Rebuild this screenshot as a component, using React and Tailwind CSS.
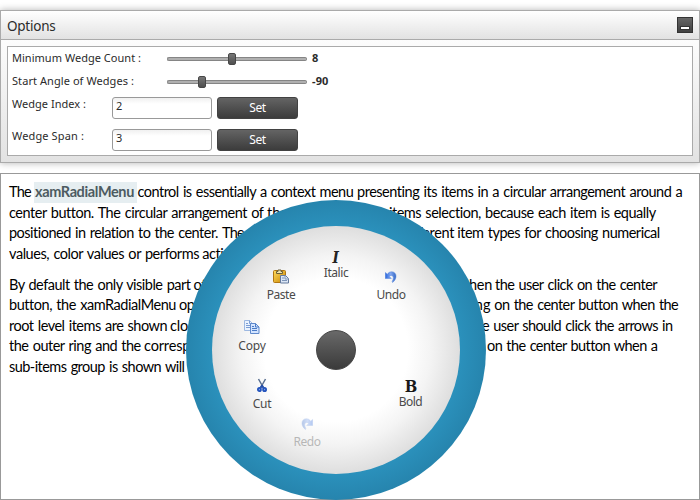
import React, { useLayoutEffect, useRef } from "react";

// Text tracked so that it fills exactly the given width.
function Fit({ w, className = "", children }) {
  const ref = useRef(null);
  useLayoutEffect(() => {
    const el = ref.current;
    el.style.letterSpacing = "0px";
    const natural = el.getBoundingClientRect().width;
    el.style.letterSpacing = (w - natural) / el.textContent.length + "px";
  }, [w, children]);
  return (
    <span className="shrink-0" style={{ width: w }}>
      <span ref={ref} className={"inline-block whitespace-nowrap " + className}>{children}</span>
    </span>
  );
}

// Each run is [text, left, right] inside the document.
const paragraphs = [
  [
    [["The", 9, 31], ["xamRadialMenu", 35, 134, true], ["control is essentially a context menu", 137.5, 353.5], ["presenting its items in a circular arrangement around a", 357, 682.5]],
    [["center button. The circular arrangement of", 9, 263], ["the", 267, 288], ["items selection, because each item is equally", 389, 656]],
    [["positioned in relation to the center.", 9, 218.5], ["The", 222, 244], ["different", 402, 453.5], ["item types for choosing numerical", 457.3, 659.7]],
    [["values, color values or performs", 9, 199], ["actions.", 202.3, 248]],
  ],
  [
    [["By default the only visible part", 9, 190.5], ["of", 193.5, 206], ["when", 458, 492], ["the user click on the center", 495, 657]],
    [["button, the xamRadialMenu", 9, 175.5], ["opens", 179, 215], ["clicking", 443, 490.5], ["on the center button when the", 494.3, 677.7]],
    [["root level items are shown", 9, 167], ["closes", 170, 208], ["the", 469, 489.5], ["user should click the arrows in", 493.3, 672.5]],
    [["the outer ring and the", 9, 140.8], ["corresponding", 144, 233], ["on the center button when a", 487, 657]],
    [["sub-items group is shown will", 9, 184.5]],
  ],
];

function Line({ runs }) {
  let x = 1;
  return (
    <div className="flex h-[20.5px] items-center">
      {runs.map(([text, left, right, marked], i) => {
        const gap = left - x;
        x = right;
        return (
          <React.Fragment key={i}>
            <span className="shrink-0" style={{ width: gap }} />
            {marked ? (
              <span className="-mr-[3px] -ml-px flex h-[21px] shrink-0 items-center bg-[#e6eef1] pr-[3px] pl-px">
                <Fit w={right - left} className="font-bold text-[#4d5b61]">{text}</Fit>
              </span>
            ) : (
              <Fit w={right - left}>{text}</Fit>
            )}
          </React.Fragment>
        );
      })}
    </div>
  );
}

function Slider({ thumb }) {
  return (
    <div className="flex h-3 w-[140px] items-center">
      <div className="h-1 shrink-0 rounded-l-sm border-y border-l border-[#858585] bg-[#b0b0b0]" style={{ width: thumb }} />
      <div className="h-3 w-2 shrink-0 rounded-[2px] border border-[#474747] bg-linear-to-b from-[#777] to-[#505050]" />
      <div className="h-1 flex-1 rounded-r-sm border-y border-r border-[#858585] bg-[#b0b0b0]" />
    </div>
  );
}

function SliderRow({ label, labelW, thumb, value, valueW }) {
  return (
    <div className="flex h-[23px] items-center">
      <div className="w-[155px]"><Fit w={labelW}>{label}</Fit></div>
      <Slider thumb={thumb} />
      <div className="ml-[5px] font-bold"><Fit w={valueW}>{value}</Fit></div>
    </div>
  );
}

function InputRow({ label, labelW, value }) {
  return (
    <div className="flex h-8 items-start">
      <div className="w-[100px] leading-[13px]"><Fit w={labelW}>{label}</Fit></div>
      <div className="h-[22px] w-[100px] rounded-[3px] border border-[#999] bg-linear-to-b from-[#f0f0f0] to-white to-30% pl-[3px] leading-[15px]">{value}</div>
      <button className="ml-[5px] flex h-[22px] w-[81px] items-center justify-center rounded-[3px] border border-[#424242] bg-linear-to-b from-[#646464] to-[#3c3c3c] text-xs text-white">
        <Fit w={16.5}>Set</Fit>
      </button>
    </div>
  );
}

const PasteIcon = () => (
  <svg width="16" height="16" viewBox="0 0 16 16">
    <defs><linearGradient id="pg" x2="1" y2="1"><stop stopColor="#ffdc60" /><stop offset="1" stopColor="#c98500" /></linearGradient></defs>
    <rect x=".5" y="1.5" width="12" height="12" rx="1" fill="url(#pg)" stroke="#b07510" />
    <path d="M3.5 4.500V2.5H5V1h3v1.5h1.5v2z" fill="#eee4ad" stroke="#6a5f38" />
    <path d="M7.500 6.500h5l3 3v4.500h-8z" fill="#dbe6f5" stroke="#657a9c" />
    <path d="M12 6.500V10h3.500M9 9h2M9 11.500h5" fill="none" stroke="#7d94b8" />
  </svg>
);
const CopyIcon = () => (
  <svg width="16" height="16" viewBox="0 0 16 16">
    <path d="M.5 1.500h5l3 3v7h-8z" fill="#eaf3ff" stroke="#9db8e1" />
    <path d="M5.500 1.500v3h3M2 4.500h2M2 6.500h5M2 8.500h5" fill="none" stroke="#7b9dd4" />
    <path d="M6.500 4.500h5l3.500 3.500v6.500h-8.500z" fill="#d3e4ff" stroke="#5f89cb" />
    <path d="M11.500 4.500v3.500h3.500M8 7.500h2M8 9.500h5M8 11.500h5" fill="none" stroke="#4a7bc6" />
  </svg>
);
const CutIcon = () => (
  <svg width="10" height="15" viewBox="0 0 10 15">
    <path d="M1.500 1L6 9M8.500 1L4 9" stroke="#596f90" strokeWidth="1.500" />
    <path d="M5 7.500L3.500 10M5 7.500L6.500 10" stroke="#264fa8" strokeWidth="2" />
    <ellipse cx="2.400" cy="11.500" rx="1.500" ry="1.700" fill="#86a7ee" stroke="#2454bd" strokeWidth="1.800" />
    <ellipse cx="7.600" cy="11.500" rx="1.500" ry="1.700" fill="#86a7ee" stroke="#2454bd" strokeWidth="1.800" />
  </svg>
);
const UndoIcon = () => (
  <svg width="12" height="12" viewBox="0 0 12 12">
    <defs><linearGradient id="ug" x2="1"><stop stopColor="#2865dc" /><stop offset=".5" stopColor="#83a8f0" /><stop offset="1" stopColor="#3467c4" /></linearGradient></defs>
    <path d="M.3 1.500v6h6L4.300 5.400C7 2.800 10 5.500 7.200 10.500L7.500 11.500C12.500 8 12 1 7 .8C4.900 .7 3.500 1.500 2.400 3.200z" fill="url(#ug)" stroke="#5584db" strokeWidth=".5" />
  </svg>
);

// Dial entries, placed by the centre of the icon and of the caption.
const items = [
  { label: "Italic", w: 24.500, x: 150, iy: 57.500, ly: 73, glyph: "I" },
  { label: "Undo", w: 29, x: 205, iy: 76.500, ly: 95, icon: <UndoIcon /> },
  { label: "Bold", w: 23.500, x: 224.500, iy: 186.500, ly: 202, glyph: "B" },
  { label: "Redo", w: 27, x: 121, iy: 223.500, ly: 242, icon: <span className="-scale-x-100"><UndoIcon /></span>, off: true },
  { label: "Cut", w: 18.500, x: 76, iy: 185.500, ly: 204, icon: <CutIcon /> },
  { label: "Copy", w: 27.500, x: 66, iy: 127, ly: 146, icon: <CopyIcon /> },
  { label: "Paste", w: 28.500, x: 95, iy: 76.500, ly: 95, icon: <PasteIcon /> },
];

function RadialMenu() {
  return (
    <div className="absolute top-[26px] left-[185px] size-[300px] rounded-full bg-[radial-gradient(circle_at_center,#2d94c0_0%,#2b91bc_58%,#2684ad_71%)]">
      <div className="absolute top-[26px] left-[26px] size-[248px] rounded-full bg-[radial-gradient(circle_closest-side,#fff_58%,#f4f4f4_76%,#dedede_100%)]" />
      <div className="absolute top-[130px] left-[130px] size-10 rounded-full border border-[#454545] bg-linear-to-b from-[#696969] to-[#3b3b3b]" />
      {items.map((it) => (
        <div key={it.label} className={it.off ? "opacity-35" : ""}>
          <div className="absolute flex h-4 w-10 items-center justify-center" style={{ left: it.x - 20, top: it.iy - 8 }}>
            {it.icon || (
              <span className={it.glyph === "I" ? "inline-block scale-x-85 font-['DejaVu_Serif',serif] text-[16px] leading-3 font-bold text-[#222] italic" : "inline-block scale-x-90 font-['DejaVu_Serif',serif] text-[16.500px] leading-3 font-bold text-[#181818]"}>{it.glyph}</span>
            )}
          </div>
          <div className="absolute flex h-4 w-10 items-center justify-center font-['Noto_Sans',sans-serif] text-xs leading-[14px] text-[#4a4a4a]" style={{ left: it.x - 20, top: it.ly - 8 }}>
            <Fit w={it.w}>{it.label}</Fit>
          </div>
        </div>
      ))}
    </div>
  );
}

export default function App() {
  return (
    <div className="h-[500px] w-[700px] overflow-hidden bg-white pt-2.5 font-['Noto_Sans',sans-serif] text-[#2b2b2b]">
      <section className="flex h-[153px] flex-col border border-[#aaa] shadow-[0_0_7px_rgba(0,0,0,0.3)]">
        <header className="flex h-[29px] shrink-0 items-center justify-between border-b border-[#aaa] bg-linear-to-b from-white to-[#e2e2e2] pr-1.5 pl-1.5 text-[13.500px]">
          <div className="pt-[3px]"><Fit w={48.500}>Options</Fit></div>
          <button className="flex size-4 items-end justify-center border border-[#333] bg-linear-to-b from-[#666] to-[#414141] pb-[3px]">
            <span className="h-[2px] w-2 bg-white outline outline-[#333]" />
          </button>
        </header>
        <div className="flex-1 bg-linear-to-b from-[#fcfcfc] to-[#e2e2e2] p-1.5">
          <div className="h-[110px] border border-[#aaa] bg-white pl-1 text-[11px]">
            <SliderRow label="Minimum Wedge Count :" labelW={129} thumb={61} value="8" valueW={6.500} />
            <SliderRow label="Start Angle of Wedges :" labelW={122} thumb={31} value="-90" valueW={16.500} />
            <div className="pt-1">
              <InputRow label="Wedge Index :" labelW={74} value="2" />
              <InputRow label="Wedge Span :" labelW={72} value="3" />
            </div>
          </div>
        </div>
      </section>
      <main className="relative mt-2.5 h-[327px] border border-[#999] bg-white pt-2 font-['Lato',sans-serif] text-[14.500px] [word-spacing:1px] text-black">
        {paragraphs.map((lines, i) => (
          <div key={i} className={i ? "mt-[10.500px]" : ""}>
            {lines.map((runs, j) => <Line key={j} runs={runs} />)}
          </div>
        ))}
        <RadialMenu />
      </main>
    </div>
  );
}
